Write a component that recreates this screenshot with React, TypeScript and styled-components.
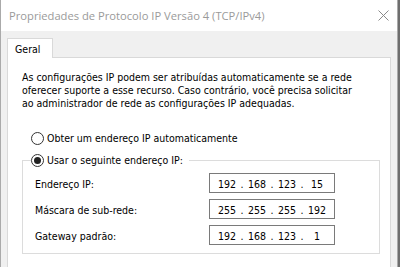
import React from 'react'
import styled, { createGlobalStyle } from 'styled-components'

const Global = createGlobalStyle`
  html, body { margin: 0; padding: 0; }
  body {
    background: #6e6e6e;
    font-family: "DejaVu Sans Condensed", "DejaVu Sans", sans-serif;
    font-size: 10.5px;
    color: #000;
    overflow: hidden;
  }
`

const Window = styled.div`
  width: 396px;
  height: 267px;
  background: #f0f0f0;
  border-left: 1px solid #aaaaaa;
  border-right: 1px solid #aaaaaa;
  display: flex;
  flex-direction: column;
  overflow: hidden;
`

const TitleBar = styled.div`
  height: 31px;
  flex: none;
  background: #fff;
  display: flex;
  align-items: center;
  justify-content: space-between;
  padding: 0 8px;
  font-family: "Open Sans", "Noto Sans", sans-serif;
  font-size: 11.2px;
  color: #9a9a9a;
`

const Title = styled.span`
  white-space: nowrap;
  margin-top: -1px;
`

const CloseIcon = styled.svg`
  width: 11px;
  height: 11px;
  margin-top: -1px;
`

const Body = styled.div`
  flex: 1;
  padding: 7px 6px 0 6px;
  display: flex;
  flex-direction: column;
`

const TabStrip = styled.div`
  display: flex;
  position: relative;
  z-index: 1;
  margin-bottom: -1px;
`

const Tab = styled.div`
  width: 46px;
  height: 20px;
  padding-left: 7px;
  box-sizing: border-box;
  background: #fff;
  border: 1px solid #d9d9d9;
  border-bottom: none;
  display: flex;
  align-items: center;
`

const Panel = styled.div`
  flex: 1;
  width: 384px;
  box-sizing: border-box;
  background: #fff;
  border: 1px solid #d9d9d9;
  border-bottom: none;
  padding: 13px 0 0 14px;
`

const Intro = styled.p`
  margin: 0;
  line-height: 13px;
  width: 342px;
`

const RadioRow = styled.label`
  display: flex;
  align-items: center;
  height: 16px;
  gap: 3px;
  white-space: nowrap;
`

const TopRadio = styled(RadioRow)`
  margin: 20px 0 0 9px;
`

const Dot = styled.span<{ $on?: boolean }>`
  width: 13px;
  height: 13px;
  box-sizing: border-box;
  border-radius: 50%;
  border: 1px solid #333;
  background: #fff;
  display: flex;
  align-items: center;
  justify-content: center;
  flex: none;

  &::after {
    content: '';
    width: 7px;
    height: 7px;
    border-radius: 50%;
    background: ${(p) => (p.$on ? '#222' : 'transparent')};
  }
`

const Group = styled.fieldset`
  margin: 6px 0 0 0;
  width: 358px;
  box-sizing: border-box;
  border: 1px solid #dcdcdc;
  padding: 5px 12px 8px 12px;
  display: grid;
  grid-template-columns: 174px 126px;
  row-gap: 6px;
  align-items: center;
`

const Legend = styled.legend`
  padding: 0 6px 0 0;
  margin-left: -4px;
`

const FieldLabel = styled.span`
  white-space: nowrap;
  padding-top: 2px;
`

const IpBox = styled.div`
  height: 20px;
  box-sizing: border-box;
  border: 1px solid #7a7a7a;
  background: #fff;
  display: flex;
  align-items: center;
  padding-left: 5px;
`

const Octet = styled.span`
  width: 24px;
  text-align: center;
  padding-top: 1px;
`

const Sep = styled.span`
  width: 6px;
  text-align: center;
  padding-top: 1px;
`

const IpField: React.FC<{ value: string }> = ({ value }) => {
  const parts = value.split('.')
  return (
    <IpBox>
      {parts.map((p, i) => (
        <React.Fragment key={i}>
          {i > 0 && <Sep>.</Sep>}
          <Octet>{p}</Octet>
        </React.Fragment>
      ))}
    </IpBox>
  )
}

const fields = [
  { label: 'Endereço IP:', value: '192.168.123.15' },
  { label: 'Máscara de sub-rede:', value: '255.255.255.192' },
  { label: 'Gateway padrão:', value: '192.168.123.1' },
]

export default function App() {
  return (
    <>
      <Global />
      <Window>
        <TitleBar>
          <Title>Propriedades de Protocolo IP Versão 4 (TCP/IPv4)</Title>
          <CloseIcon viewBox="0 0 11 11">
            <path d="M0.5 0.5 L10.5 10.5 M10.5 0.5 L0.5 10.5" stroke="#8a8a8a" strokeWidth="1" fill="none" />
          </CloseIcon>
        </TitleBar>
        <Body>
          <TabStrip>
            <Tab>Geral</Tab>
          </TabStrip>
          <Panel>
            <Intro>
              As configurações IP podem ser atribuídas automaticamente se a rede oferecer suporte a esse
              recurso. Caso contrário, você precisa solicitar ao administrador de rede as configurações IP
              adequadas.
            </Intro>
            <TopRadio>
              <Dot />
              Obter um endereço IP automaticamente
            </TopRadio>
            <Group>
              <Legend>
                <RadioRow>
                  <Dot $on />
                  Usar o seguinte endereço IP:
                </RadioRow>
              </Legend>
              {fields.map((f) => (
                <React.Fragment key={f.label}>
                  <FieldLabel>{f.label}</FieldLabel>
                  <IpField value={f.value} />
                </React.Fragment>
              ))}
            </Group>
          </Panel>
        </Body>
      </Window>
    </>
  )
}
